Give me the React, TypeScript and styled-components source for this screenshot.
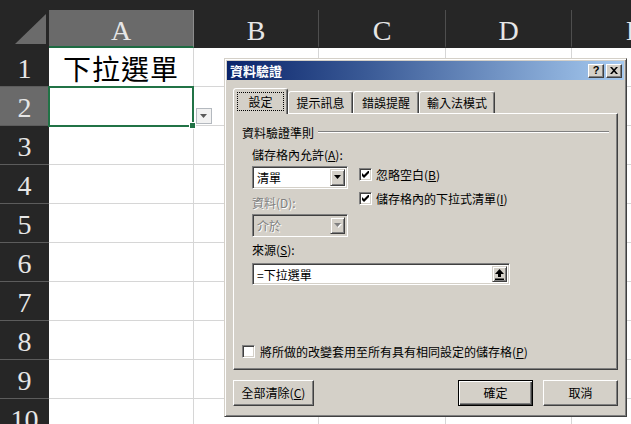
import React from "react";
import styled, { createGlobalStyle } from "styled-components";

const Global = createGlobalStyle`
  html, body { margin: 0; padding: 0; background: #262626; }
  body { width: 631px; height: 424px; overflow: hidden; }
`;

const LETTERS = ["A", "B", "C", "D", "E"];
const ROWS = Array.from({ length: 10 }, (_, i) => i + 1);

const Sheet = styled.div`
  position: relative;
  width: 631px;
  height: 424px;
  overflow: hidden;
  background: #262626;
  display: flex;
  flex-direction: column;
`;

const TopStrip = styled.div`
  flex: none;
  height: 10px;
  background: #262626;
`;

const Grid = styled.div`
  display: grid;
  grid-template-columns: 49px 145px 125px 127px 126px 126px;
  grid-template-rows: 38px repeat(10, 39px);
`;

const Corner = styled.div`
  background: #262626;
  box-sizing: border-box;
  display: flex;
  align-items: flex-end;
  justify-content: flex-end;
  padding: 0 3px 4px 0;
`;

const ColHeader = styled.div<{ $selected?: boolean }>`
  box-sizing: border-box;
  background: ${(p) => (p.$selected ? "#6a6a6a" : "#262626")};
  border-right: 1px solid ${(p) => (p.$selected ? "#8c8c8c" : "#4e4e4e")};
  border-bottom: 2px solid ${(p) => (p.$selected ? "#1e6b42" : "#262626")};
  color: #e6e6e6;
  font-family: "Liberation Serif", "Times New Roman", serif;
  font-size: 28px;
  display: flex;
  align-items: center;
  justify-content: center;
  padding-top: 6px;
`;

const RowHeader = styled.div<{ $selected?: boolean }>`
  box-sizing: border-box;
  background: ${(p) => (p.$selected ? "#6a6a6a" : "#262626")};
  border-bottom: 1px solid #5c5c5c;
  color: #e6e6e6;
  font-family: "Liberation Serif", "Times New Roman", serif;
  font-size: 28px;
  display: flex;
  align-items: center;
  justify-content: center;
  padding-top: 3px;
`;

const Cell = styled.div<{ $active?: boolean }>`
  box-sizing: border-box;
  background: #fff;
  border-right: 1px solid #d6d6d6;
  border-bottom: 1px solid #d6d6d6;
  position: ${(p) => (p.$active ? "relative" : "static")};
  z-index: ${(p) => (p.$active ? 2 : "auto")};
  display: flex;
  align-items: center;
  justify-content: center;
`;

const CellText = styled.span`
  font-family: "Liberation Serif", "Noto Sans CJK TC", serif;
  font-size: 28px;
  color: #000;
  letter-spacing: 1px;
  padding-top: 2px;
`;

const Selection = styled.div`
  position: absolute;
  left: -1px;
  top: -1px;
  right: -1px;
  bottom: -2px;
  border: 2px solid #217346;
  pointer-events: none;
`;

const FillHandle = styled.div`
  position: absolute;
  right: -4px;
  bottom: -4px;
  width: 5px;
  height: 5px;
  background: #217346;
  border: 1px solid #fff;
`;

const CellDropButton = styled.div`
  position: absolute;
  left: calc(100% + 3px);
  top: 21px;
  width: 16px;
  height: 16px;
  box-sizing: border-box;
  background: #f2f2f2;
  border: 1px solid #b4b9bf;
  display: flex;
  align-items: center;
  justify-content: center;
`;

/* ---------- Dialog ---------- */

const Dialog = styled.div`
  position: absolute;
  left: 224px;
  top: 58px;
  width: 403px;
  height: 359px;
  box-sizing: border-box;
  background: #d4d0c8;
  border: 1px solid;
  border-color: #d4d0c8 #404040 #404040 #d4d0c8;
  box-shadow: inset 1px 1px #fff, inset -1px -1px #808080;
  padding: 2px;
  display: flex;
  flex-direction: column;
  font-family: "Noto Sans CJK TC", "Noto Sans", sans-serif;
  font-size: 12px;
  color: #000;
  z-index: 5;
`;

const TitleBar = styled.div`
  flex: none;
  height: 19px;
  display: flex;
  align-items: center;
  padding: 0 2px 0 3px;
  background: linear-gradient(90deg, #0a246a 0%, #3a5a96 35%, #a6caf0 100%);
  color: #fff;
  font-weight: bold;
  font-size: 13px;
`;

const TitleButtons = styled.div`
  margin-left: auto;
  display: flex;
  gap: 2px;
`;

const TitleButton = styled.div`
  width: 16px;
  height: 14px;
  box-sizing: border-box;
  background: #d4d0c8;
  border: 1px solid;
  border-color: #fff #404040 #404040 #fff;
  box-shadow: inset -1px -1px #808080;
  display: flex;
  align-items: center;
  justify-content: center;
  color: #000;
  font-family: "Liberation Sans", Arial, sans-serif;
  font-weight: bold;
  font-size: 11px;
  line-height: 1;
`;

const Body = styled.div`
  flex: 1;
  display: flex;
  flex-direction: column;
  padding: 8px 6px;
`;

const TabStrip = styled.div`
  flex: none;
  height: 25px;
  display: flex;
  align-items: flex-end;
  position: relative;
  z-index: 1;
`;

const Tab = styled.div<{ $active?: boolean; $w: number }>`
  box-sizing: border-box;
  width: ${(p) => p.$w}px;
  height: ${(p) => (p.$active ? 26 : 22)}px;
  margin-bottom: ${(p) => (p.$active ? -1 : 0)}px;
  background: #d4d0c8;
  border: 1px solid;
  border-bottom: none;
  border-color: #fff #404040 transparent #fff;
  border-radius: 3px 3px 0 0;
  box-shadow: inset -1px 0 #808080;
  display: flex;
  justify-content: center;
  align-items: ${(p) => (p.$active ? "flex-start" : "center")};
  padding-top: ${(p) => (p.$active ? 3 : 0)}px;
`;

const FocusLabel = styled.span`
  box-sizing: border-box;
  width: 47px;
  height: 19px;
  border: 1px dotted #000;
  display: flex;
  align-items: center;
  justify-content: center;
`;

const Panel = styled.div`
  flex: 1;
  box-sizing: border-box;
  border: 1px solid;
  border-color: #fff #404040 #404040 #fff;
  box-shadow: inset -1px -1px #808080;
  padding: 10px 8px 11px 8px;
  display: flex;
  flex-direction: column;
`;

const GroupHeader = styled.div`
  height: 16px;
  display: flex;
  align-items: center;
  gap: 4px;
  &::after {
    content: "";
    flex: 1;
    border-top: 1px solid #808080;
    border-bottom: 1px solid #fff;
  }
`;

const Fields = styled.div`
  padding-left: 10px;
  display: flex;
  flex-direction: column;
`;

const Label = styled.div<{ $disabled?: boolean; $mt: number }>`
  height: 16px;
  line-height: 16px;
  margin-top: ${(p) => p.$mt}px;
  color: ${(p) => (p.$disabled ? "#808080" : "#000")};
  text-shadow: ${(p) => (p.$disabled ? "1px 1px #fff" : "none")};
`;

const TwoCols = styled.div`
  margin-top: 3px;
  display: flex;
  gap: 11px;
`;

const LeftCol = styled.div`
  width: 96px;
  display: flex;
  flex-direction: column;
`;

const RightCol = styled.div`
  padding-top: 2px;
  display: flex;
  flex-direction: column;
  gap: 11px;
`;

const Sunken = styled.div<{ $disabled?: boolean; $w: number; $h: number; $mt?: number }>`
  box-sizing: border-box;
  width: ${(p) => p.$w}px;
  height: ${(p) => p.$h}px;
  margin-top: ${(p) => p.$mt ?? 0}px;
  background: ${(p) => (p.$disabled ? "#d4d0c8" : "#fff")};
  border: 1px solid;
  border-color: #808080 #fff #fff #808080;
  box-shadow: inset 1px 1px #404040, inset -1px -1px #d4d0c8;
  padding: 2px;
  display: flex;
  align-items: stretch;
`;

const FieldText = styled.span<{ $disabled?: boolean }>`
  flex: 1;
  display: flex;
  align-items: center;
  padding-left: 2px;
  color: ${(p) => (p.$disabled ? "#808080" : "#000")};
  text-shadow: ${(p) => (p.$disabled ? "1px 1px #fff" : "none")};
`;

const RaisedBtn = styled.div<{ $w: number }>`
  box-sizing: border-box;
  width: ${(p) => p.$w}px;
  background: #d4d0c8;
  border: 1px solid;
  border-color: #d4d0c8 #404040 #404040 #d4d0c8;
  box-shadow: inset 1px 1px #fff, inset -1px -1px #808080;
  display: flex;
  align-items: center;
  justify-content: center;
`;

const CheckRow = styled.label<{ $gap?: number }>`
  display: flex;
  align-items: center;
  gap: ${(p) => p.$gap ?? 4}px;
  height: 13px;
  white-space: nowrap;
`;

const CheckBox = styled.span`
  box-sizing: border-box;
  width: 13px;
  height: 13px;
  flex: none;
  background: #fff;
  border: 1px solid;
  border-color: #808080 #fff #fff #808080;
  box-shadow: inset 1px 1px #404040, inset -1px -1px #d4d0c8;
  display: flex;
  align-items: center;
  justify-content: center;
`;

const BottomCheck = styled.div`
  margin-top: auto;
`;

const Footer = styled.div`
  flex: none;
  margin-top: 10px;
  height: 26px;
  display: flex;
  gap: 10px;
`;

const PushButton = styled.div<{ $w: number; $default?: boolean }>`
  box-sizing: border-box;
  width: ${(p) => p.$w}px;
  height: 26px;
  background: #d4d0c8;
  border: 1px solid;
  border-color: ${(p) => (p.$default ? "#000" : "#fff #404040 #404040 #fff")};
  box-shadow: ${(p) =>
    p.$default
      ? "inset 1px 1px #fff, inset -1px -1px #404040, inset -2px -2px #808080"
      : "inset -1px -1px #808080"};
  display: flex;
  align-items: center;
  justify-content: center;
  padding-bottom: 1px;
`;

const Spacer = styled.div`
  flex: 1;
`;

const Check = () => (
  <svg width="7" height="7" viewBox="0 0 7 7">
    <path d="M0 2 L2 4 L7 -1 L7 2 L2 7 L0 5 Z" fill="#000" />
  </svg>
);

const DownTri = ({ color = "#000", shadow = false }: { color?: string; shadow?: boolean }) => (
  <svg width="8" height="5" viewBox="0 0 8 5">
    {shadow && <path d="M1 1 L8 1 L4.5 5 Z" fill="#fff" />}
    <path d="M0 0 L7 0 L3.5 4 Z" fill={color} />
  </svg>
);

const UpArrow = () => (
  <svg width="9" height="11" viewBox="0 0 9 11">
    <path d="M4.5 0 L9 5 L6 5 L6 8 L3 8 L3 5 L0 5 Z" fill="#000" />
    <rect x="0" y="9.5" width="9" height="1.5" fill="#000" />
  </svg>
);

const CloseX = () => (
  <svg width="8" height="7" viewBox="0 0 8 7">
    <path d="M0 0 L2 0 L4 2.3 L6 0 L8 0 L5 3.5 L8 7 L6 7 L4 4.7 L2 7 L0 7 L3 3.5 Z" fill="#000" />
  </svg>
);

export default function App() {
  return (
    <>
      <Global />
      <Sheet>
        <TopStrip />
        <Grid>
          <Corner>
            <svg width="31" height="30" viewBox="0 0 31 30">
              <path d="M0 30 L31 30 L31 0 Z" fill="#6b6b6b" />
            </svg>
          </Corner>
          {LETTERS.map((l, i) => (
            <ColHeader key={l} $selected={i === 0}>
              {l}
            </ColHeader>
          ))}
          {ROWS.map((r) => (
            <React.Fragment key={r}>
              <RowHeader $selected={r === 2}>{r}</RowHeader>
              {[0, 1, 2, 3, 4].map((c) => (
                <Cell key={c} $active={r === 2 && c === 0}>
                  {r === 1 && c === 0 && <CellText>下拉選單</CellText>}
                  {r === 2 && c === 0 && (
                    <>
                      <Selection>
                        <FillHandle />
                      </Selection>
                      <CellDropButton>
                        <DownTri color="#5a5a5a" />
                      </CellDropButton>
                    </>
                  )}
                </Cell>
              ))}
            </React.Fragment>
          ))}
        </Grid>

        <Dialog>
          <TitleBar>
            <span>資料驗證</span>
            <TitleButtons>
              <TitleButton>?</TitleButton>
              <TitleButton>
                <CloseX />
              </TitleButton>
            </TitleButtons>
          </TitleBar>
          <Body>
            <TabStrip>
              <Tab $active $w={55}>
                <FocusLabel>設定</FocusLabel>
              </Tab>
              <Tab $w={65}>提示訊息</Tab>
              <Tab $w={66}>錯誤提醒</Tab>
              <Tab $w={76}>輸入法模式</Tab>
            </TabStrip>
            <Panel>
              <GroupHeader>資料驗證準則</GroupHeader>
              <Fields>
                <Label $mt={7}>
                  儲存格內允許(<u>A</u>):
                </Label>
                <TwoCols>
                  <LeftCol>
                    <Sunken $w={96} $h={23}>
                      <FieldText>清單</FieldText>
                      <RaisedBtn $w={15}>
                        <DownTri />
                      </RaisedBtn>
                    </Sunken>
                    <Label $disabled $mt={6}>
                      資料(D):
                    </Label>
                    <Sunken $disabled $w={96} $h={23} $mt={3}>
                      <FieldText $disabled>介於</FieldText>
                      <RaisedBtn $w={15}>
                        <DownTri color="#808080" shadow />
                      </RaisedBtn>
                    </Sunken>
                  </LeftCol>
                  <RightCol>
                    <CheckRow>
                      <CheckBox>
                        <Check />
                      </CheckBox>
                      <span>
                        忽略空白(<u>B</u>)
                      </span>
                    </CheckRow>
                    <CheckRow>
                      <CheckBox>
                        <Check />
                      </CheckBox>
                      <span>
                        儲存格內的下拉式清單(<u>I</u>)
                      </span>
                    </CheckRow>
                  </RightCol>
                </TwoCols>
                <Label $mt={5}>
                  來源(<u>S</u>):
                </Label>
                <Sunken $w={258} $h={22} $mt={5}>
                  <FieldText>=下拉選單</FieldText>
                  <RaisedBtn $w={15}>
                    <UpArrow />
                  </RaisedBtn>
                </Sunken>
              </Fields>
              <BottomCheck>
                <CheckRow $gap={5}>
                  <CheckBox />
                  <span>
                    將所做的改變套用至所有具有相同設定的儲存格(<u>P</u>)
                  </span>
                </CheckRow>
              </BottomCheck>
            </Panel>
            <Footer>
              <PushButton $w={81}>
                全部清除(<u>C</u>)
              </PushButton>
              <Spacer />
              <PushButton $w={75} $default>
                確定
              </PushButton>
              <PushButton $w={75}>取消</PushButton>
            </Footer>
          </Body>
        </Dialog>
      </Sheet>
    </>
  );
}
